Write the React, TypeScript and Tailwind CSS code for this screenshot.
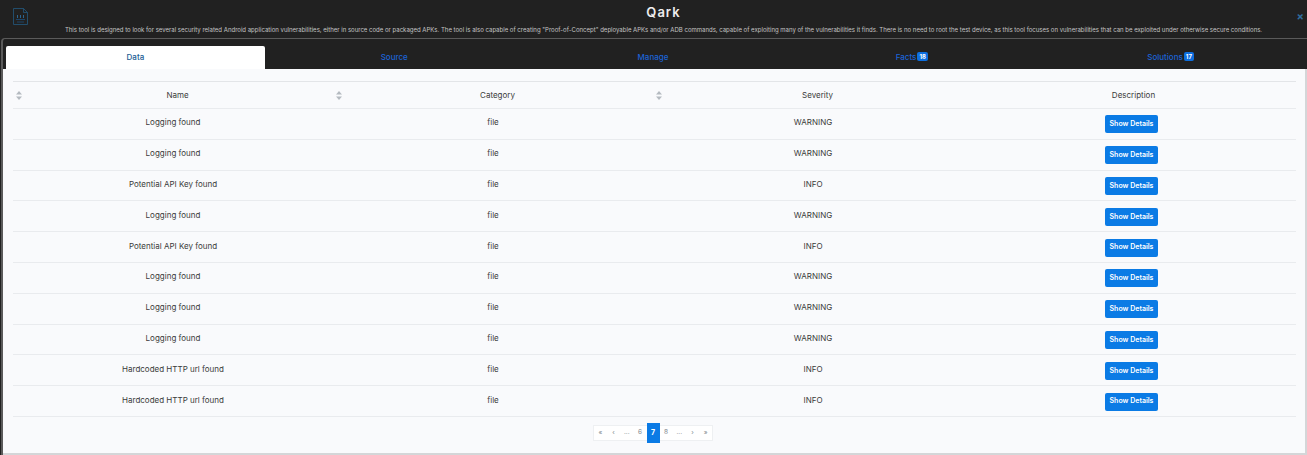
import React from "react";

const rows = [
  ["Logging found", "WARNING"],
  ["Logging found", "WARNING"],
  ["Potential API Key found", "INFO"],
  ["Logging found", "WARNING"],
  ["Potential API Key found", "INFO"],
  ["Logging found", "WARNING"],
  ["Logging found", "WARNING"],
  ["Logging found", "WARNING"],
  ["Hardcoded HTTP url found", "INFO"],
  ["Hardcoded HTTP url found", "INFO"],
];

const tabs = [
  { name: "Data" },
  { name: "Source" },
  { name: "Manage" },
  { name: "Facts", badge: "18" },
  { name: "Solutions", badge: "17" },
];

const pages = ["«", "‹", "...", "6", "7", "8", "...", "›", "»"];

function SortIcon() {
  return (
    <svg width="6" height="9" viewBox="0 0 6 9" className="shrink-0">
      <path d="M3 0 L6 3.6 H0 Z" fill="#b4bac0" />
      <path d="M3 9 L6 5.4 H0 Z" fill="#b4bac0" />
    </svg>
  );
}

function FileIcon() {
  return (
    <svg width="15" height="17" viewBox="0 0 15 17" fill="none" stroke="#23597f" strokeWidth="0.8">
      <path d="M0.5 0.5 H10.5 L14.5 4.5 V16.5 H0.5 Z" />
      <path d="M10.5 0.5 V4.5 H14.5" />
      <path d="M4.5 7 V10 M7.5 7 V10 M10.5 7 V10" stroke="#2f77ad" />
      <path d="M3 11.5 H12 M4 14 H11" stroke="#1d4f7c" />
    </svg>
  );
}

export default function App() {
  return (
    <div className="h-[455px] w-[1307px] overflow-hidden bg-[#212121] font-['Inter',sans-serif]">
      <header className="relative h-[38px] pl-[20px] text-center">
        <div className="absolute left-[13px] top-[8px]">
          <FileIcon />
        </div>
        <h1 className="pt-[4px] text-[13px] leading-[17px] font-semibold tracking-[1px] text-[#eeeeee]">Qark</h1>
        <p className="mt-[3.5px] whitespace-nowrap text-[6.03px] leading-[9px] text-[#c4c4c4]">
          This tool is designed to look for several security related Android application vulnerabilities, either in source code or packaged APKs. The tool is also capable of creating "Proof-of-Concept" deployable APKs and/or ADB commands, capable of exploiting many of the vulnerabilities it finds. There is no need to root the test device, as this tool focuses on vulnerabilities that can be exploited under otherwise secure conditions.
        </p>
        <span className="absolute right-[3px] top-[9px] text-[11px] leading-[14px] font-bold text-[#2f6d9e]">×</span>
      </header>

      <div className="ml-[1px] h-[417px] rounded-tl-[4px] border-t border-l-2 border-[#5a5a5a]">
        <nav className="flex h-[30px] items-end pl-[3px] pr-[7px]">
          {tabs.map((t, i) => (
            <div
              key={t.name}
              className={
                i === 0
                  ? "flex h-[23px] flex-1 items-center justify-center rounded-t-[2px] bg-white pb-[2px] text-[8px] font-medium text-[#1b5c94]"
                  : "flex h-[23px] flex-1 items-center justify-center gap-[1px] pb-[2px] text-[8px] font-medium text-[#1c63d6]"
              }
            >
              {t.name}
              {t.badge && (
                <span className="rounded-[2px] bg-[#0d6fe0] px-[2px] text-[6px] leading-[9px] font-bold text-white">{t.badge}</span>
              )}
            </div>
          ))}
        </nav>

        <main className="h-[386px] border-r-2 border-b-2 border-[#d4d6d8] bg-[#f9fafc] pl-[10px] pr-[8px] pt-[12px]">
          <table className="w-[1283px] table-fixed border-collapse border-t border-[#e3e5e8] text-[8px] text-[#3a3a3a]">
            <thead>
              <tr className="h-[27px] border-b border-[#e9ebee]">
                {["Name", "Category", "Severity"].map((h) => (
                  <th key={h} className="w-[320px] font-normal">
                    <div className="flex items-center pl-[3px]">
                      <SortIcon />
                      <span className="flex-1 text-center">{h}</span>
                    </div>
                  </th>
                ))}
                <th className="pr-[2px] font-normal">Description</th>
              </tr>
            </thead>
            <tbody>
              {rows.map((r, i) => (
                <tr key={i} className="h-[30.8px] border-b border-[#e9ebee] text-center">
                  <td className="pb-[3px]">{r[0]}</td>
                  <td className="pb-[3px]">file</td>
                  <td className="pb-[3px]">{r[1]}</td>
                  <td className="pr-[6px] pt-[1px]">
                    <button className="h-[18px] w-[53px] rounded-[2px] bg-[#0b7be5] text-[7px] font-semibold text-white">Show Details</button>
                  </td>
                </tr>
              ))}
            </tbody>
          </table>

          <div className="mt-[8px] flex justify-center pr-[4px]">
            <div className="flex h-[16px] items-center border border-[#eef0f2] bg-white">
              {pages.map((p, i) =>
                p === "7" ? (
                  <span key={i} className="flex h-[20px] w-[13px] items-center justify-center bg-[#0b7be5] text-[7px] font-bold text-white">{p}</span>
                ) : (
                  <span key={i} className="flex h-full w-[13.2px] items-center justify-center text-[6.5px] text-[#7d858c]">{p}</span>
                )
              )}
            </div>
          </div>
        </main>
      </div>
    </div>
  );
}
